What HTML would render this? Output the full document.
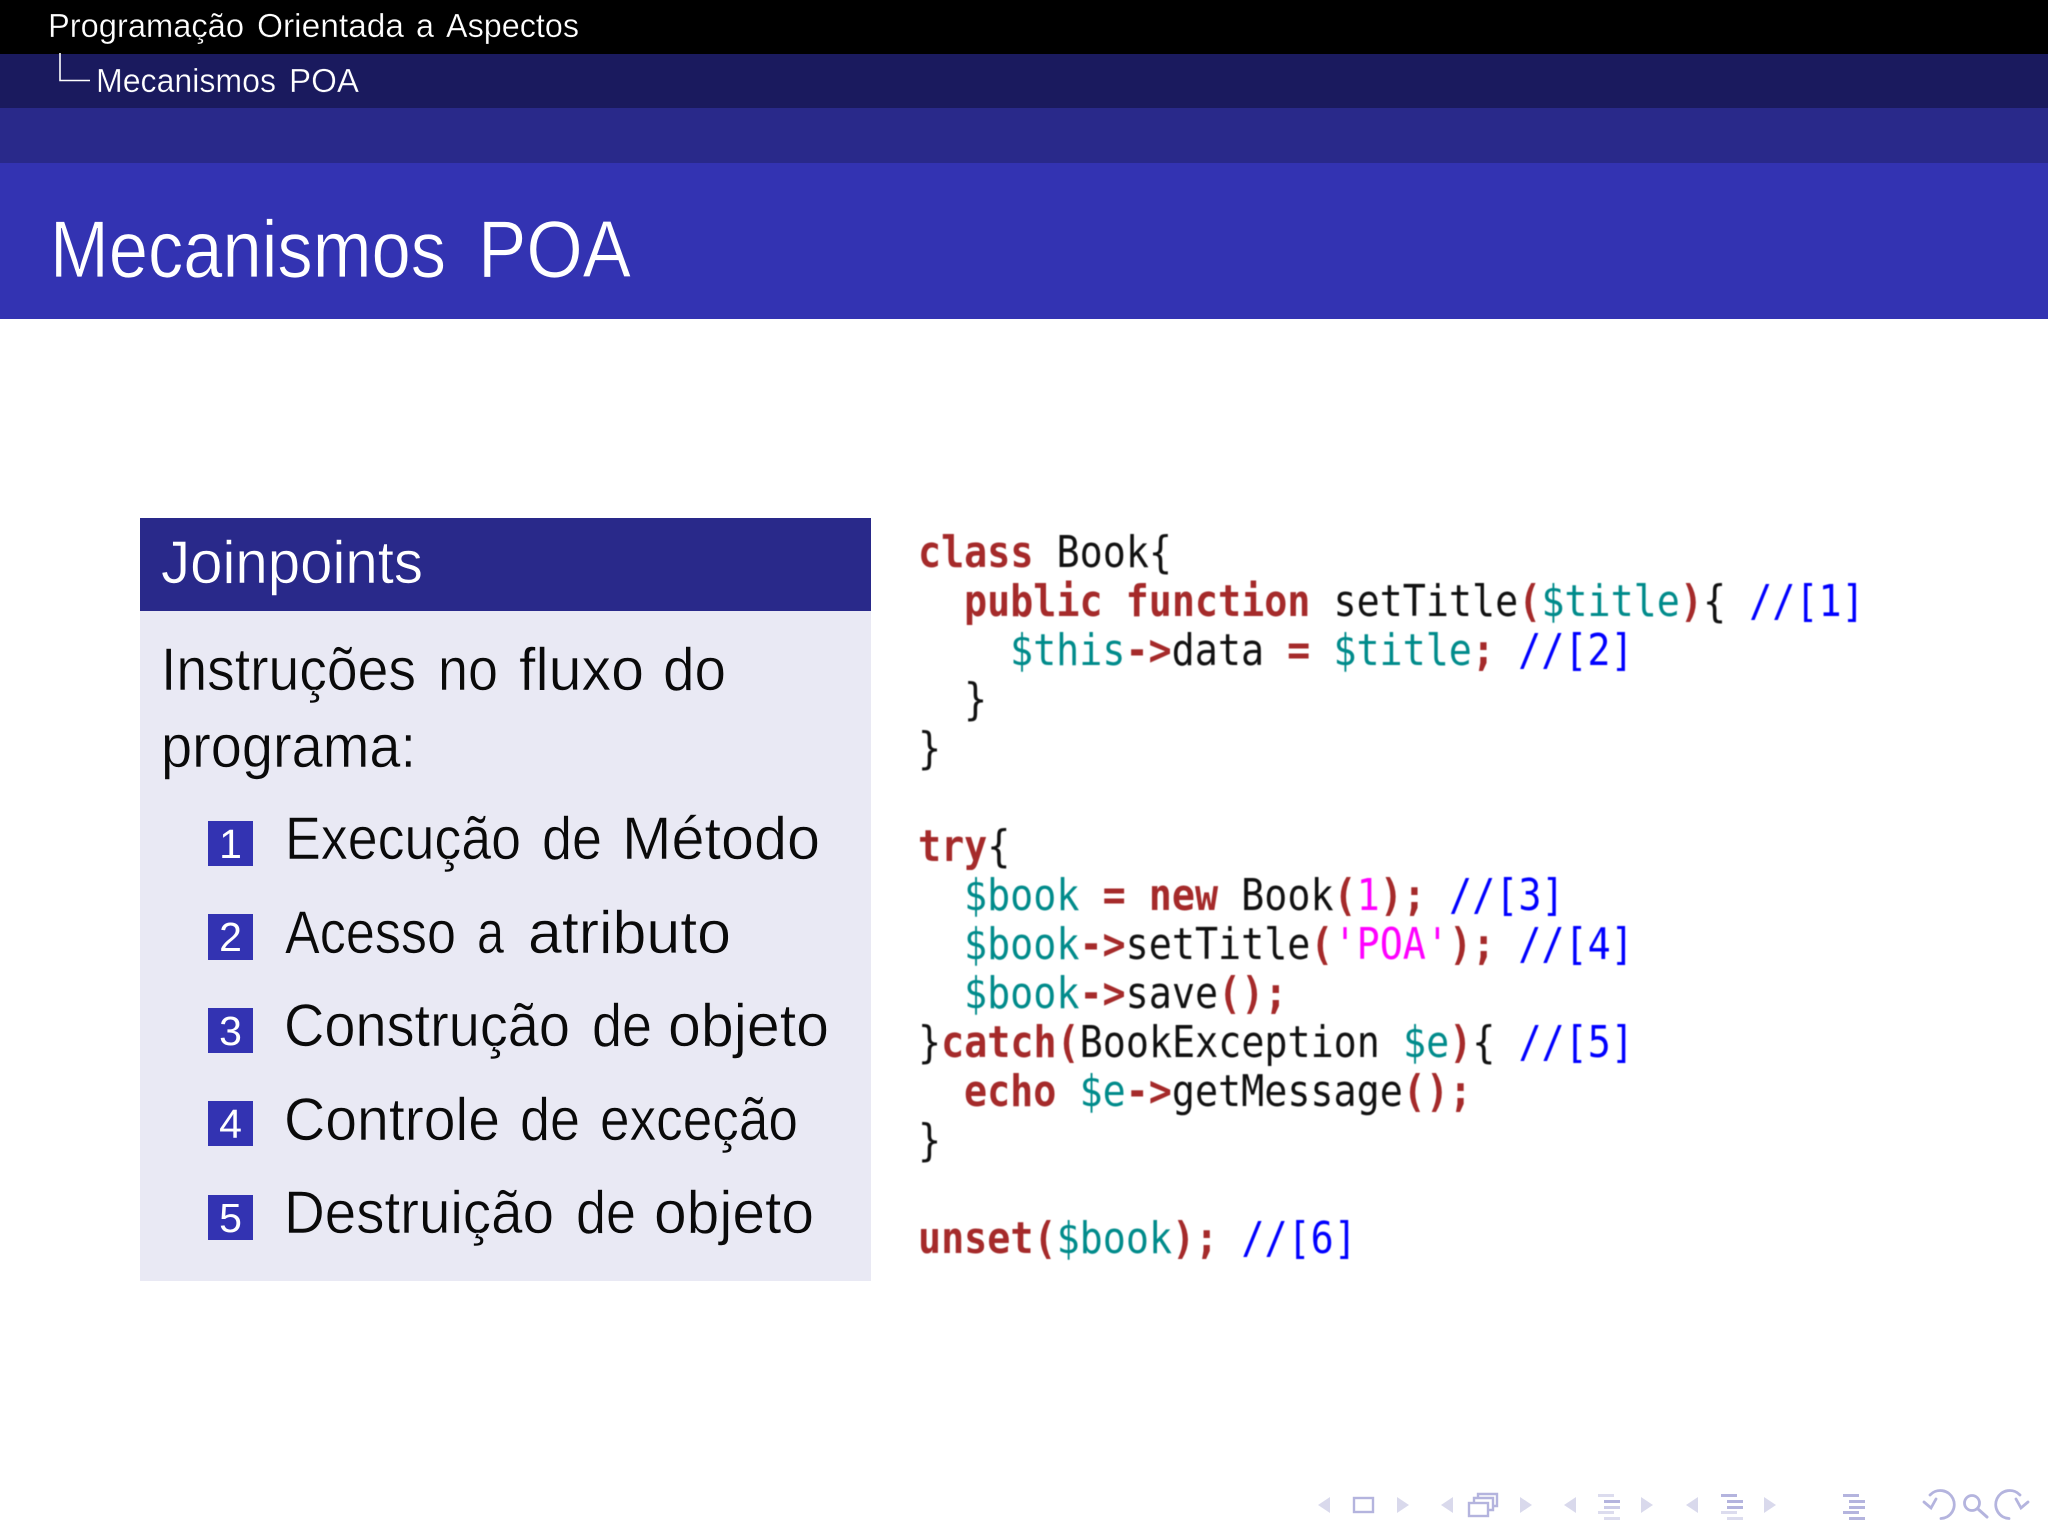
<!DOCTYPE html>
<html><head><meta charset="utf-8"><style>
html,body{margin:0;padding:0;width:2048px;height:1536px;background:#fff;overflow:hidden}
svg{display:block;position:absolute;left:0;top:0}
.s{font-family:"Liberation Sans",sans-serif}
.c{font-family:"DejaVu Sans Mono",monospace;font-size:44px;white-space:pre}
.k{fill:#a52a2a;font-weight:bold}
.v{fill:#008b8b}
.m{fill:#0000ff}
.n{fill:#ff00ff}
.p{fill:#a52a2a;font-weight:bold}
.t{fill:#111}
</style></head><body>
<svg width="2048" height="1536" viewBox="0 0 2048 1536" xmlns="http://www.w3.org/2000/svg">
<rect x="0" y="0" width="2048" height="54" fill="#000"/>
<rect x="0" y="54" width="2048" height="54" fill="#1a1a5e"/>
<rect x="0" y="108" width="2048" height="55" fill="#29298a"/>
<rect x="0" y="163" width="2048" height="156" fill="#3333b2"/>
<g class="s" fill="#fff" font-size="33" stroke="#000" stroke-width=".35" lengthAdjust="spacingAndGlyphs">
<text x="48" y="37" textLength="196" lengthAdjust="spacingAndGlyphs">Programação</text>
<text x="257" y="37" textLength="147" lengthAdjust="spacingAndGlyphs">Orientada</text>
<text x="416" y="37" textLength="18" lengthAdjust="spacingAndGlyphs">a</text>
<text x="446" y="37" textLength="133" lengthAdjust="spacingAndGlyphs">Aspectos</text>
</g>
<g class="s" fill="#fff" font-size="33" stroke="#1a1a5e" stroke-width=".35">
<text x="96" y="92" textLength="180" lengthAdjust="spacingAndGlyphs">Mecanismos</text>
<text x="289" y="92" textLength="70" lengthAdjust="spacingAndGlyphs">POA</text>
</g>
<g class="s" fill="#fff" font-size="81" stroke="#3333b2" stroke-width=".8">
<text x="50" y="277" textLength="396" lengthAdjust="spacingAndGlyphs">Mecanismos</text>
<text x="478" y="277" textLength="153" lengthAdjust="spacingAndGlyphs">POA</text>
</g>
<path d="M60 53V80.500H90" fill="none" stroke="#fff" stroke-width="1.6"/>

<rect x="140" y="518" width="731" height="93" fill="#29298a"/>
<rect x="140" y="611" width="731" height="670" fill="#e9e9f4"/>
<text class="s" x="161" y="583" font-size="60" fill="#fff" stroke="#29298a" stroke-width=".6" textLength="262" lengthAdjust="spacingAndGlyphs">Joinpoints</text>
<g class="s" fill="#0a0a0a" font-size="60" stroke="#e9e9f4" stroke-width=".6">
<text x="161" y="690" textLength="255" lengthAdjust="spacingAndGlyphs">Instruções</text>
<text x="438" y="690" textLength="60" lengthAdjust="spacingAndGlyphs">no</text>
<text x="519" y="690" textLength="125" lengthAdjust="spacingAndGlyphs">fluxo</text>
<text x="663" y="690" textLength="63" lengthAdjust="spacingAndGlyphs">do</text>
<text x="161" y="767" textLength="255" lengthAdjust="spacingAndGlyphs">programa:</text>
<text x="285" y="859" textLength="236" lengthAdjust="spacingAndGlyphs">Execução</text>
<text x="542" y="859" textLength="60" lengthAdjust="spacingAndGlyphs">de</text>
<text x="622" y="859" textLength="198" lengthAdjust="spacingAndGlyphs">Método</text>
<text x="285" y="953" textLength="171" lengthAdjust="spacingAndGlyphs">Acesso</text>
<text x="477" y="953" textLength="27" lengthAdjust="spacingAndGlyphs">a</text>
<text x="528" y="953" textLength="203" lengthAdjust="spacingAndGlyphs">atributo</text>
<text x="284" y="1046" textLength="286" lengthAdjust="spacingAndGlyphs">Construção</text>
<text x="592" y="1046" textLength="60" lengthAdjust="spacingAndGlyphs">de</text>
<text x="668" y="1046" textLength="161" lengthAdjust="spacingAndGlyphs">objeto</text>
<text x="284" y="1140" textLength="216" lengthAdjust="spacingAndGlyphs">Controle</text>
<text x="520" y="1140" textLength="60" lengthAdjust="spacingAndGlyphs">de</text>
<text x="600" y="1140" textLength="198" lengthAdjust="spacingAndGlyphs">exceção</text>
<text x="284" y="1233" textLength="270" lengthAdjust="spacingAndGlyphs">Destruição</text>
<text x="576" y="1233" textLength="60" lengthAdjust="spacingAndGlyphs">de</text>
<text x="654" y="1233" textLength="160" lengthAdjust="spacingAndGlyphs">objeto</text>
</g>
<g fill="#3333b2">
<rect x="208" y="821" width="45" height="45"/>
<rect x="208" y="914" width="45" height="46"/>
<rect x="208" y="1008" width="45" height="45"/>
<rect x="208" y="1101" width="45" height="45"/>
<rect x="208" y="1195" width="45" height="45"/>
</g>
<g class="s" fill="#fff" font-size="41" text-anchor="middle">
<text x="230.500" y="858">1</text>
<text x="230.500" y="951">2</text>
<text x="230.500" y="1045">3</text>
<text x="230.500" y="1138">4</text>
<text x="230.500" y="1232">5</text>
</g>

<g class="c t" style="filter:blur(.6px)">
<text xml:space="preserve" transform="translate(918,567) scale(.872,1)"><tspan class="k">class</tspan> Book{</text>
<text xml:space="preserve" transform="translate(964,616) scale(.872,1)"><tspan class="k">public function</tspan> setTitle<tspan class="p">(</tspan><tspan class="v">$title</tspan><tspan class="p">)</tspan>{ <tspan class="m">//[1]</tspan></text>
<text xml:space="preserve" transform="translate(1010,665) scale(.872,1)"><tspan class="v">$this</tspan><tspan class="k">-&gt;</tspan>data <tspan class="k">=</tspan> <tspan class="v">$title</tspan><tspan class="p">;</tspan> <tspan class="m">//[2]</tspan></text>
<text xml:space="preserve" transform="translate(964,714) scale(.872,1)">}</text>
<text xml:space="preserve" transform="translate(918,763) scale(.872,1)">}</text>
<text xml:space="preserve" transform="translate(918,861) scale(.872,1)"><tspan class="k">try</tspan>{</text>
<text xml:space="preserve" transform="translate(964,910) scale(.872,1)"><tspan class="v">$book</tspan> <tspan class="k">=</tspan> <tspan class="k">new</tspan> Book<tspan class="p">(</tspan><tspan class="n">1</tspan><tspan class="p">);</tspan> <tspan class="m">//[3]</tspan></text>
<text xml:space="preserve" transform="translate(964,959) scale(.872,1)"><tspan class="v">$book</tspan><tspan class="k">-&gt;</tspan>setTitle<tspan class="p">(</tspan><tspan class="n">'POA'</tspan><tspan class="p">);</tspan> <tspan class="m">//[4]</tspan></text>
<text xml:space="preserve" transform="translate(964,1008) scale(.872,1)"><tspan class="v">$book</tspan><tspan class="k">-&gt;</tspan>save<tspan class="p">();</tspan></text>
<text xml:space="preserve" transform="translate(918,1057) scale(.872,1)">}<tspan class="k">catch</tspan><tspan class="p">(</tspan>BookException <tspan class="v">$e</tspan><tspan class="p">)</tspan>{ <tspan class="m">//[5]</tspan></text>
<text xml:space="preserve" transform="translate(964,1106) scale(.872,1)"><tspan class="k">echo</tspan> <tspan class="v">$e</tspan><tspan class="k">-&gt;</tspan>getMessage<tspan class="p">();</tspan></text>
<text xml:space="preserve" transform="translate(918,1155) scale(.872,1)">}</text>
<text xml:space="preserve" transform="translate(918,1253) scale(.872,1)"><tspan class="k">unset</tspan><tspan class="p">(</tspan><tspan class="v">$book</tspan><tspan class="p">);</tspan> <tspan class="m">//[6]</tspan></text>
</g>

<g fill="#d9d9ec">
<path d="M1318 1505l12-8v16z"/><path d="M1409 1505l-12-8v16z"/>
<path d="M1441 1505l12-8v16z"/><path d="M1532 1505l-12-8v16z"/>
<path d="M1564 1505l12-8v16z"/><path d="M1653 1505l-12-8v16z"/>
<path d="M1686 1505l12-8v16z"/><path d="M1776 1505l-12-8v16z"/>
</g>
<g fill="none" stroke="#b4b4de" stroke-width="2.400">
<rect x="1354" y="1498" width="19" height="14"/>
<rect x="1469" y="1503" width="19" height="13"/>
<path d="M1474 1503v-5h19v12h-5"/>
<path d="M1478 1498v-4h19v12h-4"/>
</g>
<g fill="#dcdcee">
<rect x="1598" y="1494" width="16" height="3"/><rect x="1604" y="1500" width="16" height="3"/><rect x="1604" y="1506" width="16" height="3"/><rect x="1598" y="1511" width="16" height="3"/><rect x="1604" y="1517" width="16" height="3"/>
<rect x="1721" y="1511" width="16" height="3"/><rect x="1727" y="1517" width="16" height="3"/>
</g>
<g fill="#b4b4de">
<rect x="1604" y="1500" width="16" height="3"/><rect x="1604" y="1506" width="16" height="3" opacity=".4"/>
<rect x="1721" y="1494" width="16" height="3"/><rect x="1727" y="1500" width="16" height="3"/><rect x="1727" y="1506" width="16" height="3"/>
<rect x="1843" y="1494" width="16" height="3"/><rect x="1849" y="1500" width="16" height="3"/><rect x="1849" y="1506" width="16" height="3"/><rect x="1843" y="1511" width="16" height="3"/><rect x="1849" y="1517" width="16" height="3"/>
</g>
<g fill="none" stroke="#b4b4de" stroke-width="2.800" stroke-linecap="round">
<path d="M1930 1495a14 14 0 1 1 11 23.500"/><path d="M1924 1502l7 6 5-9"/>
<circle cx="1972" cy="1503" r="7.500"/><path d="M1978 1509l9 8" stroke-width="3"/>
<path d="M2020 1495a14 14 0 1 0-11 23.500"/><path d="M2028 1502l-7 6-5-9"/>
</g>
</svg>
</body></html>
